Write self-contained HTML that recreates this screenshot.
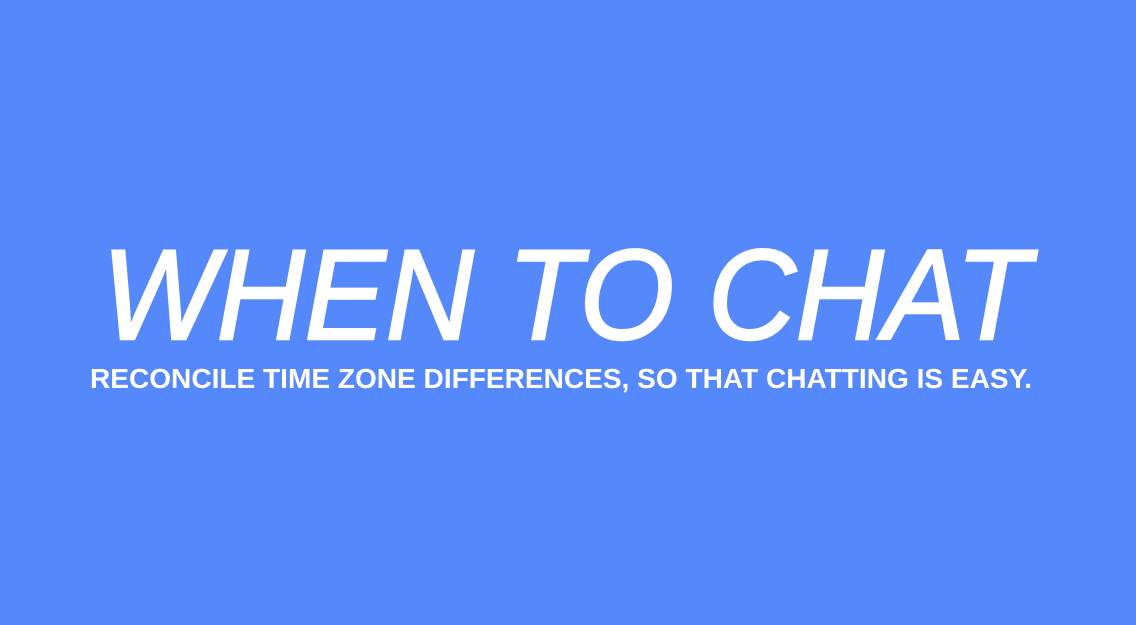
<!DOCTYPE html>
<html><head><meta charset="utf-8"><style>
html,body{margin:0;padding:0;width:1136px;height:625px;overflow:hidden;background:#5588fb;}
svg{display:block}
</style></head><body>
<svg width="1136" height="625" xmlns="http://www.w3.org/2000/svg">
<rect width="1136" height="625" fill="#5588fb"/>
<text x="102" y="339" font-family="Liberation Sans, sans-serif" font-style="italic" font-size="128" fill="#fff" stroke="#fff" stroke-width="2.5" textLength="928" lengthAdjust="spacingAndGlyphs">WHEN TO CHAT</text>
<text x="90" y="388" font-family="Liberation Sans, sans-serif" font-weight="bold" font-size="28" fill="#fff" textLength="942" lengthAdjust="spacingAndGlyphs">RECONCILE TIME ZONE DIFFERENCES, SO THAT CHATTING IS EASY.</text>
</svg>
</body></html>
